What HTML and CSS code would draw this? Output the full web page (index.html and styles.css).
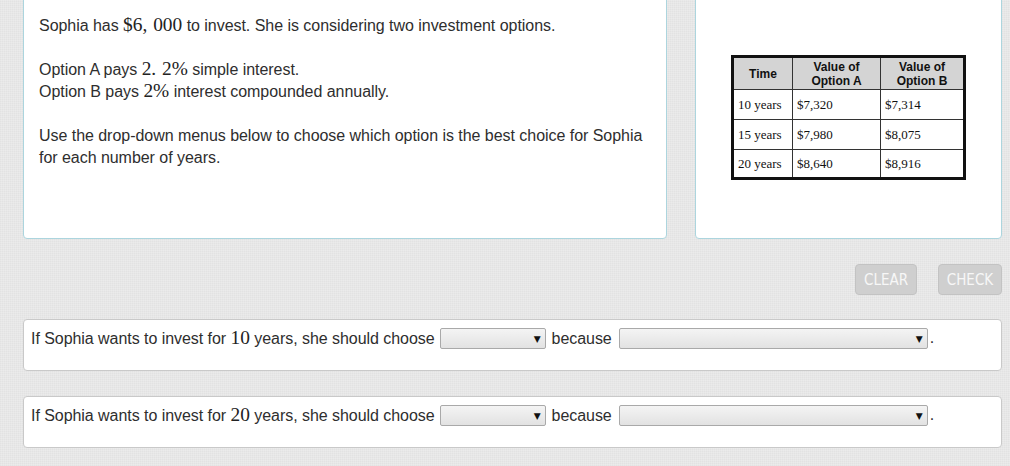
FILE: index.html
```html
<!DOCTYPE html>
<html>
<head>
<meta charset="utf-8">
<link rel="stylesheet" href="styles.css">
</head>
<body>
<div class="page">
  <div class="top">
    <div class="card problem">
      <p>Sophia has <span class="math">$6,<span class="sp"></span>000</span> to invest. She is considering two investment options.</p>
      <p>Option A pays <span class="math">2.<span class="sp"></span>2%</span> simple interest.<br>Option B pays <span class="math">2%</span> interest compounded annually.</p>
      <p>Use the drop-down menus below to choose which option is the best choice for Sophia for each number of years.</p>
    </div>
    <div class="card figure">
      <table class="values">
        <tr class="head">
          <th class="c-time">Time</th>
          <th class="c-a">Value of<br>Option A</th>
          <th class="c-b">Value of<br>Option B</th>
        </tr>
        <tr><td>10 years</td><td>$7,320</td><td>$7,314</td></tr>
        <tr><td>15 years</td><td>$7,980</td><td>$8,075</td></tr>
        <tr class="last"><td>20 years</td><td>$8,640</td><td>$8,916</td></tr>
      </table>
    </div>
  </div>
  <div class="actions">
    <button class="btn btn-clear">CLEAR</button>
    <button class="btn btn-check">CHECK</button>
  </div>
  <div class="row">
    <span class="lead">If Sophia wants to invest for <span class="math">10</span> years, she should choose</span>
    <span class="select short"><span class="arrow">▼</span></span>
    <span class="lead because">because</span>
    <span class="select long"><span class="arrow">▼</span></span><span class="dot">.</span>
  </div>
  <div class="row">
    <span class="lead">If Sophia wants to invest for <span class="math">20</span> years, she should choose</span>
    <span class="select short"><span class="arrow">▼</span></span>
    <span class="lead because">because</span>
    <span class="select long"><span class="arrow">▼</span></span><span class="dot">.</span>
  </div>
</div>
</body>
</html>
```
FILE: styles.css
```css
html, body {
  margin: 0;
  padding: 0;
}
body {
  background-color: #e7e7e7;
  background-image:
    repeating-linear-gradient(0deg, rgba(255,255,255,0.18) 0 1px, transparent 1px 2px),
    repeating-linear-gradient(90deg, rgba(0,0,0,0.025) 0 1px, transparent 1px 2px);
  font-family: "Liberation Sans", Arial, sans-serif;
  color: #2e2e2e;
  font-size: 16px;
  overflow: hidden;
}
.page {
  padding: 0 8px 0 23px;
  margin-top: -6px;
}
.top {
  display: flex;
  gap: 28px;
  height: 245px;
}
.card {
  box-sizing: border-box;
  background: #fff;
  border: 1px solid #acd5de;
  border-radius: 4px;
}
.problem {
  width: 644px;
  padding: 20px 15px 0 15px;
}
.problem p {
  margin: 0 0 22px 0;
  line-height: 22px;
  letter-spacing: -0.04px;
}
.math {
  font-family: "Liberation Serif", "DejaVu Serif", serif;
  font-size: 19.4px;
  line-height: 16px;
  letter-spacing: 0;
  color: #222;
}
.sp {
  display: inline-block;
  width: 0.3em;
}
.figure {
  flex: 1;
  display: flex;
  align-items: center;
  justify-content: center;
  padding-top: 2px;
}
.values {
  border-collapse: collapse;
  border: 3px solid #111;
  width: 235px;
  font-family: "Liberation Serif", serif;
  font-size: 13px;
  color: #111;
}
.values th {
  background: #d4d4d4;
  font-family: "Liberation Sans", Arial, sans-serif;
  font-weight: bold;
  font-size: 12px;
  line-height: 14px;
  height: 31px;
  padding: 0;
  border: 1px solid #333;
}
.values td {
  border: 1px solid #333;
  height: 29px;
  padding: 0 4px;
  text-align: left;
  white-space: nowrap;
}
.values .c-time { width: 58px; }
.values .c-a { width: 87px; }
.values tr.last td { height: 27px; }
.actions {
  display: flex;
  justify-content: flex-end;
  gap: 21px;
  padding: 25px 0 24px 0;
}
.btn {
  box-sizing: border-box;
  height: 31px;
  border: 1px solid #c3c3c3;
  border-radius: 4px;
  background: #cfcfcf;
  color: #f7f7f7;
  font-family: "Liberation Sans Narrow", "DejaVu Sans Condensed", "Roboto", sans-serif;
  font-size: 15px;
  padding: 0;
}
.btn-clear { width: 62px; }
.btn-check { width: 64px; }
.row {
  box-sizing: border-box;
  height: 52px;
  margin-bottom: 25px;
  background: #fff;
  border: 1px solid #c9c9c9;
  border-radius: 4px;
  padding: 8px 7px;
  line-height: 20px;
  display: flex;
  align-items: flex-start;
  gap: 4px;
  white-space: nowrap;
}
.row .lead {
  letter-spacing: -0.05px;
  padding-top: 1px;
}
.row .because {
  margin-left: 2px;
}
.select {
  box-sizing: border-box;
  display: inline-flex;
  justify-content: flex-end;
  align-items: center;
  height: 21px;
  border: 1px solid #a9a9a9;
  border-radius: 2px;
  background: linear-gradient(#f4f4f4, #e2e2e2);
  padding-right: 4px;
}
.select.short { width: 106px; margin-left: 1px; }
.select.long { width: 309px; margin-left: 3px; }
.arrow {
  font-size: 9px;
  color: #111;
  font-family: "DejaVu Sans", sans-serif;
}
.dot {
  margin-left: -2px;
}
```
